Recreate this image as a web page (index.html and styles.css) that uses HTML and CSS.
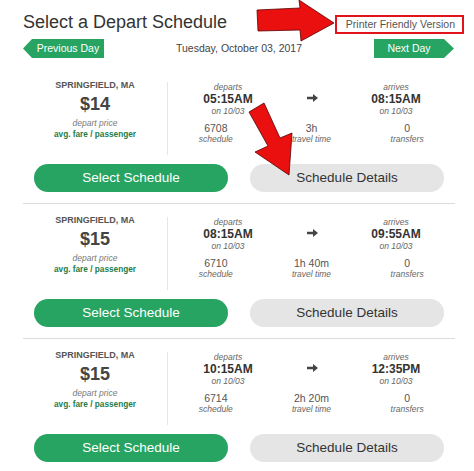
FILE: index.html
```html
<!DOCTYPE html>
<html>
<head>
<meta charset="utf-8">
<link rel="stylesheet" href="styles.css">
</head>
<body>
<div class="page">
  <header class="head">
    <h1 class="title">Select a Depart Schedule</h1>
    <a class="print">Printer Friendly Version</a>
  </header>
  <nav class="daynav">
    <a class="day prev">Previous Day</a>
    <span class="date">Tuesday, October 03, 2017</span>
    <a class="day next">Next Day</a>
  </nav>
  <div class="results">
    <section class="trip">
      <div class="info">
        <div class="fare">
          <div class="city">SPRINGFIELD, MA</div>
          <div class="price">$14</div>
          <div class="fare-label">depart price</div>
          <div class="avg">avg. fare / passenger</div>
        </div>
        <div class="times">
          <div class="toprow">
            <div class="col"><div class="lbl">departs</div><div class="clock">05:15AM</div><div class="lbl">on 10/03</div></div>
            <div class="go"><svg width="11" height="8" viewBox="0 0 11 8"><path d="M0 2.8h6V0l5 4-5 4V5.2H0z" fill="#444"/></svg></div>
            <div class="col"><div class="lbl">arrives</div><div class="clock">08:15AM</div><div class="lbl">on 10/03</div></div>
          </div>
          <div class="bottomrow">
            <div class="col"><div class="num">6708</div><div class="lbl">schedule</div></div>
            <div class="col"><div class="num">3h</div><div class="lbl">travel time</div></div>
            <div class="col"><div class="num">0</div><div class="lbl">transfers</div></div>
          </div>
        </div>
      </div>
      <div class="actions">
        <a class="btn select">Select Schedule</a>
        <a class="btn details">Schedule Details</a>
      </div>
    </section>
    <section class="trip">
      <div class="info">
        <div class="fare">
          <div class="city">SPRINGFIELD, MA</div>
          <div class="price">$15</div>
          <div class="fare-label">depart price</div>
          <div class="avg">avg. fare / passenger</div>
        </div>
        <div class="times">
          <div class="toprow">
            <div class="col"><div class="lbl">departs</div><div class="clock">08:15AM</div><div class="lbl">on 10/03</div></div>
            <div class="go"><svg width="11" height="8" viewBox="0 0 11 8"><path d="M0 2.8h6V0l5 4-5 4V5.2H0z" fill="#444"/></svg></div>
            <div class="col"><div class="lbl">arrives</div><div class="clock">09:55AM</div><div class="lbl">on 10/03</div></div>
          </div>
          <div class="bottomrow">
            <div class="col"><div class="num">6710</div><div class="lbl">schedule</div></div>
            <div class="col"><div class="num">1h 40m</div><div class="lbl">travel time</div></div>
            <div class="col"><div class="num">0</div><div class="lbl">transfers</div></div>
          </div>
        </div>
      </div>
      <div class="actions">
        <a class="btn select">Select Schedule</a>
        <a class="btn details">Schedule Details</a>
      </div>
    </section>
    <section class="trip">
      <div class="info">
        <div class="fare">
          <div class="city">SPRINGFIELD, MA</div>
          <div class="price">$15</div>
          <div class="fare-label">depart price</div>
          <div class="avg">avg. fare / passenger</div>
        </div>
        <div class="times">
          <div class="toprow">
            <div class="col"><div class="lbl">departs</div><div class="clock">10:15AM</div><div class="lbl">on 10/03</div></div>
            <div class="go"><svg width="11" height="8" viewBox="0 0 11 8"><path d="M0 2.8h6V0l5 4-5 4V5.2H0z" fill="#444"/></svg></div>
            <div class="col"><div class="lbl">arrives</div><div class="clock">12:35PM</div><div class="lbl">on 10/03</div></div>
          </div>
          <div class="bottomrow">
            <div class="col"><div class="num">6714</div><div class="lbl">schedule</div></div>
            <div class="col"><div class="num">2h 20m</div><div class="lbl">travel time</div></div>
            <div class="col"><div class="num">0</div><div class="lbl">transfers</div></div>
          </div>
        </div>
      </div>
      <div class="actions">
        <a class="btn select">Select Schedule</a>
        <a class="btn details">Schedule Details</a>
      </div>
    </section>
  </div>
  <svg class="annot" width="474" height="471" viewBox="0 0 474 471">
    <polygon points="257,10 300,8 299,0 334,23 301,41 300,30 258,31" fill="#ea1010" stroke="#5a0000" stroke-width="0.8"/>
    <polygon points="249,112 264,103 280,138 292,133 289,175 255,152 268,146" fill="#ea1010" stroke="#5a0000" stroke-width="0.8"/>
  </svg>
</div>
</body>
</html>
```
FILE: styles.css
```css
body {
  margin: 0;
  font-family: "Liberation Sans", Arial, sans-serif;
  background: #fff;
  color: #333;
}
.page {
  position: relative;
  width: 474px;
  height: 471px;
  box-sizing: border-box;
  padding: 11px 19px 0 23px;
  overflow: hidden;
}
.head {
  display: flex;
  justify-content: space-between;
  align-items: flex-start;
  height: 23px;
}
.title {
  margin: 0;
  font-size: 18px;
  line-height: 22px;
  font-weight: normal;
  color: #333;
}
.print {
  margin: 4px -9px 0 0;
  border: 2px solid #e3131b;
  padding: 0 7px 0 9px;
  font-size: 10.5px;
  line-height: 15px;
  color: #555;
  text-decoration: none;
}
.daynav {
  display: flex;
  align-items: center;
  justify-content: space-between;
  height: 19px;
  margin-top: 5px;
}
.day {
  height: 19px;
  line-height: 19px;
  font-size: 10.5px;
  color: #fff;
  background: #28a462;
  text-align: center;
  box-sizing: border-box;
}
.prev {
  width: 81px;
  padding-left: 9px;
  clip-path: polygon(9px 0, 100% 0, 100% 100%, 9px 100%, 0 50%);
}
.next {
  width: 80px;
  padding-right: 10px;
  margin-right: 1px;
  clip-path: polygon(0 0, calc(100% - 10px) 0, 100% 50%, calc(100% - 10px) 100%, 0 100%);
}
.date {
  font-size: 10.5px;
  line-height: 19px;
  color: #444;
}
.results {
  margin-top: 11px;
}
.trip {
  padding: 11px 0;
  border-bottom: 1px solid #dcdcdc;
}
.info {
  display: flex;
  align-items: flex-start;
}
.fare {
  width: 144px;
  text-align: center;
}
.city {
  font-size: 9px;
  line-height: 11px;
  font-weight: bold;
  color: #555;
}
.price {
  font-size: 18px;
  line-height: 22px;
  font-weight: bold;
  color: #444;
  margin-top: 2px;
}
.fare-label {
  font-size: 8.5px;
  line-height: 11px;
  font-style: italic;
  color: #777;
  margin-top: 3px;
}
.avg {
  font-size: 8.25px;
  line-height: 11px;
  font-weight: bold;
  color: #237d4b;
}
.times {
  flex: 1;
  margin-top: 2px;
  height: 73px;
  border-left: 1px solid #e6e6e6;
}
.toprow {
  display: grid;
  grid-template-columns: repeat(3, 84px);
  padding-left: 18px;
}
.bottomrow {
  display: grid;
  grid-template-columns: repeat(3, 1fr);
  margin-top: 7px;
}
.col {
  text-align: center;
}
.lbl {
  font-size: 8.5px;
  line-height: 10px;
  font-style: italic;
  color: #666;
}
.clock {
  font-size: 12px;
  line-height: 14px;
  font-weight: bold;
  color: #333;
}
.go {
  display: flex;
  justify-content: center;
  padding-top: 12px;
}
.num {
  font-size: 10.5px;
  line-height: 11px;
  color: #555;
}
.actions {
  display: grid;
  grid-template-columns: 1fr 1fr;
  margin-top: 9px;
}
.btn {
  margin: 0 11px;
  height: 28px;
  border-radius: 14px;
  font-size: 13.5px;
  line-height: 28px;
  text-align: center;
}
.select {
  background: #28a462;
  color: #fff;
}
.details {
  background: #e5e5e5;
  color: #333;
}
.annot {
  position: absolute;
  top: 0;
  left: 0;
  pointer-events: none;
}
```
